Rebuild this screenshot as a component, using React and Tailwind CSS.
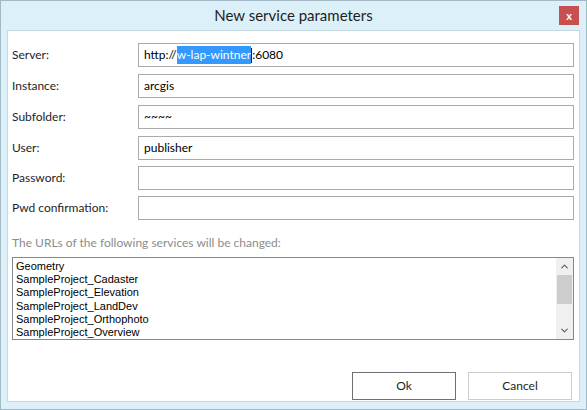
// New service parameters dialog (Windows 8 style)
import { ChevronDown, ChevronUp } from "lucide-react";

const fields = [
  { label: "Server:", value: "server", mt: "" },
  { label: "Instance:", value: "arcgis", mt: "mt-[7px]" },
  { label: "Subfolder:", value: "~~~~", mt: "mt-[7px]" },
  { label: "User:", value: "publisher", mt: "mt-[7px]" },
  { label: "Password:", value: "", mt: "mt-[6px]" },
  { label: "Pwd confirmation:", value: "", mt: "mt-[6px]" },
];

const services = [
  "Geometry",
  "SampleProject_Cadaster",
  "SampleProject_Elevation",
  "SampleProject_LandDev",
  "SampleProject_Orthophoto",
  "SampleProject_Overview",
];

function FieldValue({ value }) {
  if (value === "server") {
    return (
      <span className="flex items-center">
        http://
        <span className="bg-[#3399ff] text-white">w-lap-wintner</span>
        <span className="w-px h-[15px] bg-[#1a1a1a]" />
        :6080
      </span>
    );
  }
  return <span>{value}</span>;
}

export default function App() {
  return (
    <div
      className="w-[587px] h-[410px] bg-[#dcf0f9] border border-[#a3b9c5] flex flex-col"
      style={{ fontFamily: 'Lato, "Noto Sans", sans-serif' }}
    >
      {/* Title bar */}
      <div className="relative h-[29px] flex items-center justify-center">
        <span className="text-[15px] text-[#1e1e1e] leading-none">New service parameters</span>
        <div className="absolute right-[7px] top-[5px] w-[20px] h-[19px] bg-[#c75050] flex items-center justify-center">
          <span className="text-white text-[11px] font-bold leading-none">x</span>
        </div>
      </div>

      {/* Client area */}
      <div className="flex-1 mx-[6px] mb-[7px] bg-white border border-[#c6d7e0] flex flex-col pt-[12px] pl-[4px] pr-[5px]">
        {fields.map((f) => (
          <div key={f.label} className={`flex items-center h-[24px] ${f.mt}`}>
            <div className="w-[126px] text-[12px] text-[#1e1e1e]">{f.label}</div>
            <div className="flex-1 h-full border border-[#ababab] flex items-center pl-[5px] text-[12px] text-black">
              <FieldValue value={f.value} />
            </div>
          </div>
        ))}

        <div className="mt-[14px] text-[12px] text-[#8c8c8c]">
          The URLs of the following services will be changed:
        </div>

        <div className="mt-[5px] h-[83px] border border-[#828790] flex">
          <div
            className="flex-1 pl-[3px] pt-[2px] text-[11px] leading-[13.2px] text-black"
            style={{ fontFamily: '"Liberation Sans", Arial, sans-serif' }}
          >
            {services.map((s) => (
              <div key={s}>{s}</div>
            ))}
          </div>
          <div className="w-[17px] bg-[#f0f0f0] flex flex-col items-center">
            <div className="h-[17px] flex items-center justify-center text-[#606060]">
              <ChevronUp size={11} strokeWidth={2.5} />
            </div>
            <div className="w-[15px] h-[29px] bg-[#cdcdcd]" />
            <div className="flex-1" />
            <div className="h-[17px] flex items-center justify-center text-[#606060]">
              <ChevronDown size={11} strokeWidth={2.5} />
            </div>
          </div>
        </div>

        <div className="flex-1" />

        <div className="flex justify-end gap-[12px] pr-[2px] mb-[1px]">
          <button className="w-[104px] h-[28px] border border-[#707070] bg-white text-[12px] text-[#1e1e1e]">
            Ok
          </button>
          <button className="w-[104px] h-[28px] border border-[#cccccc] bg-white text-[12px] text-[#1e1e1e]">
            Cancel
          </button>
        </div>
      </div>
    </div>
  );
}
